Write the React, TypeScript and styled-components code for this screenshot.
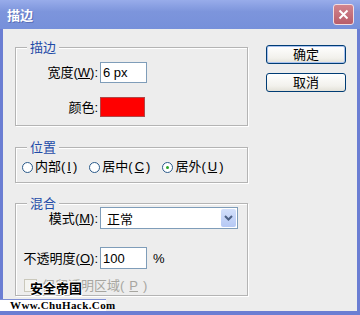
import React from "react";
import styled, { createGlobalStyle } from "styled-components";

const GlobalStyle = createGlobalStyle`
  html, body {
    margin: 0;
    padding: 0;
    background: #ededed;
  }
  body {
    font-family: "Liberation Sans", "Noto Sans CJK SC", sans-serif;
    font-size: 13px;
  }
`;

const Window = styled.div`
  position: relative;
  width: 360px;
  height: 315px;
  display: flex;
  flex-direction: column;
  overflow: hidden;
`;

const TitleBar = styled.div`
  height: 29px;
  flex: none;
  display: flex;
  align-items: center;
  justify-content: space-between;
  padding: 0 6px 0 7px;
  background: linear-gradient(#98acea, #7d95dc 40%, #7690da);
`;

const Title = styled.span`
  color: #fff;
  font-weight: bold;
  font-size: 13px;
  text-shadow: 1px 1px 0 #5a6fb8;
`;

const CloseBtn = styled.div`
  width: 19px;
  height: 19px;
  border: 1px solid #f3dde0;
  border-radius: 3px;
  background: linear-gradient(#d2848d, #b85d6a);
  display: flex;
  align-items: center;
  justify-content: center;
`;

const Frame = styled.div`
  flex: 1;
  display: flex;
  border-left: 3px solid #6b7ed3;
  border-right: 3px solid #6b7ed3;
  border-bottom: 4px solid #6b7ed3;
  background: #ededed;
  padding: 16px 0 0 12px;
  gap: 18px;
`;

const LeftCol = styled.div`
  width: 233px;
  padding-top: 2px;
  display: flex;
  flex-direction: column;
`;

const RightCol = styled.div`
  display: flex;
  flex-direction: column;
  gap: 9px;
`;

const Group = styled.div<{ $pt: number; $pb: number; $mt?: number }>`
  position: relative;
  border: 1px solid #b4b4b4;
  box-shadow: inset 1px 1px 0 #fff, 1px 1px 0 #fff;
  padding: ${(p) => p.$pt}px 0 ${(p) => p.$pb}px;
  margin-top: ${(p) => p.$mt || 0}px;
`;

const Legend = styled.span`
  position: absolute;
  top: -9px;
  left: 11px;
  padding: 0 3px;
  background: #ededed;
  color: #1f4ba8;
  font-size: 13px;
  line-height: 17px;
`;

const FormGrid = styled.div<{ $rowGap: number }>`
  display: grid;
  grid-template-columns: 82px auto;
  column-gap: 2px;
  row-gap: ${(p) => p.$rowGap}px;
  align-items: center;
`;

const Label = styled.span`
  text-align: right;
  color: #000;
  line-height: 15px;
  white-space: nowrap;
  u {
    text-decoration: underline;
  }
`;

const TextBox = styled.div<{ $w: number; $h: number }>`
  width: ${(p) => p.$w}px;
  height: ${(p) => p.$h}px;
  box-sizing: border-box;
  border: 1px solid #7f9db9;
  background: #fff;
  display: flex;
  align-items: center;
  padding-left: 2px;
  font-size: 13px;
`;

const InputRow = styled.div`
  display: flex;
  align-items: center;
  gap: 6px;
`;

const Swatch = styled.div`
  width: 45px;
  height: 20px;
  box-sizing: border-box;
  background: #ff0000;
  border: 1px solid #b04848;
`;

const Select = styled.div`
  width: 138px;
  height: 22px;
  box-sizing: border-box;
  border: 1px solid #7f9db9;
  background: #fff;
  display: flex;
  align-items: center;
  justify-content: space-between;
  padding: 1px 1px 1px 6px;
`;

const DropBtn = styled.div`
  width: 15px;
  height: 18px;
  border-radius: 2px;
  background: linear-gradient(#d3e0fb, #b5c8f4);
  display: flex;
  align-items: center;
  justify-content: center;
`;

const RadioRow = styled.div`
  display: flex;
  align-items: center;
  padding-left: 6px;
  gap: 12px;
`;

const RadioItem = styled.span`
  display: flex;
  align-items: center;
  gap: 2px;
  line-height: 14px;
`;

const RadioDot = styled.span<{ $on?: boolean }>`
  width: 9px;
  height: 9px;
  border: 1px solid #2a5a8a;
  border-radius: 50%;
  background: #fff;
  display: flex;
  align-items: center;
  justify-content: center;
  &::after {
    content: "";
    width: 3px;
    height: 3px;
    border-radius: 50%;
    background: ${(p) => (p.$on ? "#2aa52a" : "transparent")};
  }
`;

const CheckRow = styled.div`
  display: flex;
  align-items: center;
  gap: 5px;
  padding-left: 8px;
  margin-top: 10px;
  color: #a7a6a0;
  line-height: 13px;
`;

const CheckBox = styled.span`
  width: 11px;
  height: 11px;
  border: 1px solid #cac8bb;
  background: #f4f4f0;
`;

const Button = styled.div<{ $default?: boolean }>`
  width: 80px;
  height: 19px;
  box-sizing: border-box;
  border: 1px solid #003c74;
  border-radius: 3px;
  background: linear-gradient(#ffffff, #f2f1ec 70%, #e3e1d8);
  box-shadow: ${(p) => (p.$default ? "inset 0 0 0 1px #a9c2ef" : "none")};
  display: flex;
  align-items: center;
  justify-content: center;
  line-height: 15px;
  color: #000;
`;

const Watermark = styled.div`
  position: absolute;
  left: 0;
  bottom: 4px;
  display: flex;
  flex-direction: column;
  font-weight: bold;
  color: #000;
`;

const MarkCn = styled.span`
  margin-left: 30px;
  margin-bottom: 2px;
  font-family: "Noto Sans CJK SC", sans-serif;
  font-size: 13px;
  line-height: 18px;
  text-shadow: -1px 0 #fff, 1px 0 #fff, 0 -1px #fff, 0 1px #fff, 1px 1px #fff,
    -1px -1px #fff;
`;

const MarkEn = styled.span`
  width: 106px;
  padding-left: 10px;
  box-sizing: border-box;
  background: #fff;
  border-top: 1px solid #7f8fd4;
  font-family: "Liberation Serif", serif;
  font-size: 11px;
  line-height: 11px;
  letter-spacing: 0.4px;
`;

function App() {
  return (
    <Window>
      <GlobalStyle />
      <TitleBar>
        <Title>描边</Title>
        <CloseBtn>
          <svg width="11" height="11" viewBox="0 0 11 11">
            <path d="M1.5 1.5 L9.5 9.5 M9.5 1.5 L1.5 9.5" stroke="#fff" strokeWidth="2" />
          </svg>
        </CloseBtn>
      </TitleBar>
      <Frame>
        <LeftCol>
          <Group $pt={14} $pb={8}>
            <Legend>描边</Legend>
            <FormGrid $rowGap={14}>
              <Label>
                宽度(<u>W</u>):
              </Label>
              <TextBox $w={47} $h={21}>6 px</TextBox>
              <Label>颜色:</Label>
              <Swatch />
            </FormGrid>
          </Group>
          <Group $pt={12} $pb={8} $mt={21}>
            <Legend>位置</Legend>
            <RadioRow>
              <RadioItem>
                <RadioDot />
                内部(<u>I</u>)
              </RadioItem>
              <RadioItem>
                <RadioDot />
                居中(<u>C</u>)
              </RadioItem>
              <RadioItem>
                <RadioDot $on />
                居外(<u>U</u>)
              </RadioItem>
            </RadioRow>
          </Group>
          <Group $pt={3} $pb={3} $mt={20}>
            <Legend>混合</Legend>
            <FormGrid $rowGap={18}>
              <Label>
                模式(<u>M</u>):
              </Label>
              <Select>
                <span>正常</span>
                <DropBtn>
                  <svg width="9" height="6" viewBox="0 0 9 6">
                    <path d="M1 1 L4.5 4.5 L8 1" stroke="#4d6185" strokeWidth="2" fill="none" />
                  </svg>
                </DropBtn>
              </Select>
              <Label>
                不透明度(<u>O</u>):
              </Label>
              <InputRow>
                <TextBox $w={47} $h={22}>100</TextBox>
                <span>%</span>
              </InputRow>
            </FormGrid>
            <CheckRow>
              <CheckBox />
              保留透明区域(<u>P</u>)
            </CheckRow>
          </Group>
        </LeftCol>
        <RightCol>
          <Button $default>确定</Button>
          <Button>取消</Button>
        </RightCol>
      </Frame>
      <Watermark>
        <MarkCn>安全帝国</MarkCn>
        <MarkEn>Www.ChuHack.Com</MarkEn>
      </Watermark>
    </Window>
  );
}

export default App;
